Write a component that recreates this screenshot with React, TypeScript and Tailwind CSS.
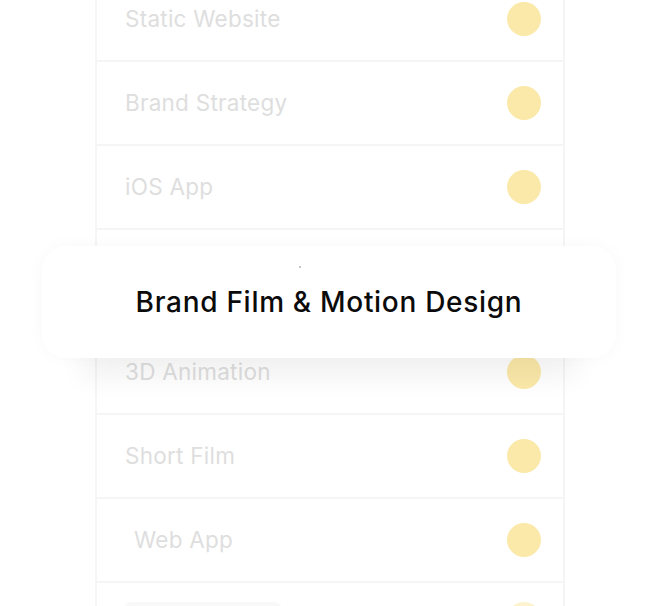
import React from "react";

interface Service {
  label: string;
  tall?: boolean;
  indent?: boolean;
  skeleton?: boolean;
}

const services: Service[] = [
  { label: "Static Website" },
  { label: "Brand Strategy" },
  { label: "iOS App" },
  { label: "Brand Film & Motion Design", tall: true },
  { label: "3D Animation" },
  { label: "Short Film" },
  { label: "Web App", indent: true },
  { label: "next", skeleton: true },
];

const ServiceRow: React.FC<{ item: Service }> = ({ item }) => (
  <div
    className={
      "flex items-center justify-between border-b-2 border-[#f5f5f5] pl-[28px] pr-[22px] " +
      (item.tall ? "h-[101px]" : "h-[84px]")
    }
  >
    {item.skeleton ? (
      <span className="h-[44px] w-[156px] rounded-[6px] bg-[#f8f8f8]" />
    ) : (
      <span
        className={
          "text-[22.5px] leading-none text-[#dedede] tracking-[0.25px] " + (item.indent ? "pl-[9px]" : "")
        }
      >
        {item.tall ? "" : item.label}
      </span>
    )}
    <span
      className={
        "rounded-full " + (item.skeleton ? "h-[44px] w-[34px] bg-[#fdf3cf]" : "h-[34px] w-[34px] bg-[#fbe9a9]")
      }
    />
  </div>
);

export default function App() {
  return (
    <div
      className="relative h-[606px] w-[659px] overflow-hidden bg-white"
      style={{ fontFamily: "Inter, 'Noto Sans', sans-serif" }}
    >
      <div className="ml-[95px] mt-[-22px] w-[470px] border-x-2 border-[#f5f5f5]">
        {services.map((s) => (
          <ServiceRow key={s.label} item={s} />
        ))}
      </div>

      <div className="absolute left-[42px] top-[246px] flex h-[112px] w-[574px] items-center justify-center rounded-[24px] bg-white shadow-[0_60px_26px_-40px_rgba(0,0,0,0.055),0_0_16px_rgba(0,0,0,0.03)]">
        <span className="absolute left-[257px] top-[20px] h-[2px] w-[2px] rounded-full bg-[#b5b5b5]" />
        <span className="text-[28px] font-medium leading-none tracking-[0.7px] text-[#0b0b0b]">
          Brand Film &amp; Motion Design
        </span>
      </div>
    </div>
  );
}
